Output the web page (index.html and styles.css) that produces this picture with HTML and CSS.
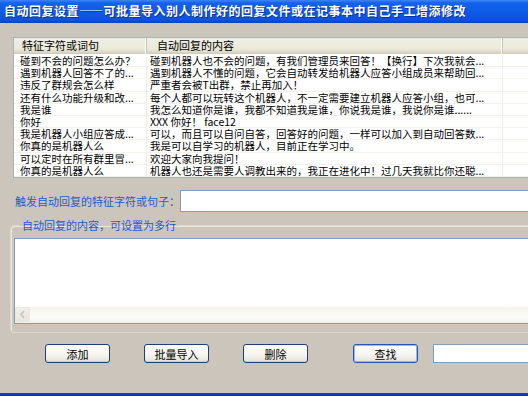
FILE: index.html
```html
<!DOCTYPE html>
<html lang="zh-CN">
<head>
  <meta charset="UTF-8">
  <title>自动回复设置</title>
  <link rel="stylesheet" href="styles.css">
</head>
<body>
  <div class="window">
    <div class="titlebar">自动回复设置——可批量导入别人制作好的回复文件或在记事本中自己手工增添修改</div>

    <div class="listview">
      <div class="row head">
        <div class="cell c1">特征字符或词句</div>
        <div class="cell c2">自动回复的内容</div>
        <div class="cell c3"></div>
      </div>
      <div class="row">
        <div class="cell c1">碰到不会的问题怎么办？</div>
        <div class="cell c2">碰到机器人也不会的问题，有我们管理员来回答！【换行】下次我就会...</div>
        <div class="cell c3"></div>
      </div>
      <div class="row">
        <div class="cell c1">遇到机器人回答不了的...</div>
        <div class="cell c2">遇到机器人不懂的问题，它会自动转发给机器人应答小组成员来帮助回...</div>
        <div class="cell c3"></div>
      </div>
      <div class="row">
        <div class="cell c1">违反了群规会怎么样</div>
        <div class="cell c2">严重者会被T出群，禁止再加入！</div>
        <div class="cell c3"></div>
      </div>
      <div class="row">
        <div class="cell c1">还有什么功能升级和改...</div>
        <div class="cell c2">每个人都可以玩转这个机器人，不一定需要建立机器人应答小组，也可...</div>
        <div class="cell c3"></div>
      </div>
      <div class="row">
        <div class="cell c1">我是谁</div>
        <div class="cell c2">我怎么知道你是谁，我都不知道我是谁，你说我是谁，我说你是谁......</div>
        <div class="cell c3"></div>
      </div>
      <div class="row">
        <div class="cell c1">你好</div>
        <div class="cell c2">XXX 你好！ face12</div>
        <div class="cell c3"></div>
      </div>
      <div class="row">
        <div class="cell c1">我是机器人小组应答成...</div>
        <div class="cell c2">可以，而且可以自问自答，回答好的问题，一样可以加入到自动回答数...</div>
        <div class="cell c3"></div>
      </div>
      <div class="row">
        <div class="cell c1">你真的是机器人么</div>
        <div class="cell c2">我是可以自学习的机器人，目前正在学习中。</div>
        <div class="cell c3"></div>
      </div>
      <div class="row">
        <div class="cell c1">可以定时在所有群里冒...</div>
        <div class="cell c2">欢迎大家向我提问！</div>
        <div class="cell c3"></div>
      </div>
      <div class="row">
        <div class="cell c1">你真的是机器人么</div>
        <div class="cell c2">机器人也还是需要人调教出来的，我正在进化中！过几天我就比你还聪...</div>
        <div class="cell c3"></div>
      </div>
    </div>

    <div class="trigger">
      <label class="blue" for="trigger_input">触发自动回复的特征字符或句子：</label>
      <input type="text" id="trigger_input" class="textbox wide">
    </div>

    <fieldset class="group">
      <legend class="blue">自动回复的内容，可设置为多行</legend>
      <div class="memo">
        <div class="memo-body"></div>
        <div class="hscroll">
          <div class="arrow">
            <svg width="15" height="15" viewBox="0 0 15 15"><path d="M9 4 L6 7.5 L9 11" fill="none" stroke="#c3c1bb" stroke-width="1.6"/></svg>
          </div>
        </div>
      </div>
    </fieldset>

    <div class="actions">
      <button class="btn">添加</button>
      <button class="btn">批量导入</button>
      <button class="btn">删除</button>
      <button class="btn find">查找</button>
      <input type="text" class="textbox search">
    </div>

    <div class="frame-bottom"></div>
  </div>
</body>
</html>
```

FILE: styles.css
```css
body {
  margin: 0;
  background-color: #cbc5bb;
  font-family: "Noto Sans CJK SC", "Liberation Sans", sans-serif;
  font-size: 11px;
  overflow: hidden;
}

.window {
  width: 528px;
  height: 396px;
  display: flex;
  flex-direction: column;
  overflow: hidden;
}

.titlebar {
  height: 23px;
  flex: none;
  box-sizing: border-box;
  padding-left: 4px;
  line-height: 22px;
  color: #fff;
  font-size: 12px;
  font-weight: bold;
  letter-spacing: 0.5px;
  white-space: nowrap;
  text-shadow: 1px 1px #0c2f9c;
  background: linear-gradient(#3d86f5 0, #1462ec 3px, #0d5ae6 12px, #0a53de 20px, #0842c4 23px);
}

/* list view */
.listview {
  flex: none;
  margin: 14px 0 2px 13px;
  width: 540px;
  height: 141px;
  box-sizing: border-box;
  border: 1px solid #a9b1b9;
  border-right: none;
  background-color: #fff;
  overflow: hidden;
}

.row {
  display: flex;
  height: 12.2px;
  line-height: 12px;
  font-size: 10.5px;
  white-space: nowrap;
  color: #000;
}

.row .cell {
  flex: none;
  box-sizing: border-box;
  overflow: hidden;
  border-right: 1px solid #f1efe2;
  border-bottom: 1px solid #f3f1e8;
}

.row.head {
  height: 16px;
  line-height: 15px;
  margin-bottom: 1px;
  font-size: 11px;
  background: linear-gradient(#efeee4, #ebeadb 11px, #e2decd 13px, #d6d2c2 15px, #cbc7b8 16px);
}

.row.head .cell {
  border-bottom: none;
  border-right: 1px solid #c7c5b2;
  box-shadow: inset -2px 0 0 -1px #fff;
}

.c1 { width: 133px; padding-left: 6px; }
.c2 { width: 356px; padding-left: 3px; }
.c3 { width: 60px; }

.row.head .c1 { padding-left: 8px; }
.row.head .c2 { padding-left: 10px; }

/* trigger row */
.trigger {
  flex: none;
  display: flex;
  align-items: center;
  margin-top: 10px;
  height: 22px;
}

.blue {
  color: #1c5ad8;
}

.trigger label {
  width: 165px;
  padding-left: 15px;
  flex: none;
}

.textbox {
  box-sizing: border-box;
  border: 1px solid #7f9db9;
  background-color: #fff;
  margin: 0;
  padding: 0 3px;
  font: inherit;
}

.textbox.wide {
  width: 360px;
  height: 22px;
  flex: none;
}

/* group box */
.group {
  flex: none;
  margin: 7px 0 0 10px;
  padding: 6px 0 8px 3px;
  width: 600px;
  box-sizing: border-box;
  border: 1px solid #dcd7cb;
  border-radius: 4px;
  box-shadow: inset 1px 1px 0 #ece8df;
}

.group legend {
  margin-left: 5px;
  padding: 0 3px;
  line-height: 13px;
}

.memo {
  height: 86px;
  box-sizing: border-box;
  border: 1px solid #7f9db9;
  border-right: none;
  background-color: #fff;
  display: flex;
  flex-direction: column;
}

.memo-body {
  flex: 1;
}

.hscroll {
  height: 16px;
  display: flex;
  background: linear-gradient(#f4f3ee, #fcfcfa 10px, #f1efe6);
}

.arrow {
  width: 15px;
  height: 15px;
  margin: 0 0 1px 0;
  box-sizing: border-box;
  border: 1px solid #e9e7df;
  border-radius: 2px;
  background: linear-gradient(#f0efe9, #e8e6de);
}

.arrow svg {
  display: block;
  margin: -1px 0 0 -1px;
}

/* buttons */
.actions {
  flex: none;
  display: flex;
  align-items: center;
  margin-top: 11px;
  padding-left: 45px;
  gap: 34px;
}

.btn {
  flex: none;
  width: 65px;
  height: 19px;
  padding: 0;
  box-sizing: border-box;
  border: 1px solid #1c3f78;
  border-radius: 3px;
  background: linear-gradient(#fff, #f5f4ef 60%, #e3e1d6);
  box-shadow: inset 0 -1px 0 #d6d0c4;
  color: #000;
  font: inherit;
  line-height: 16px;
}

.btn.find {
  margin-left: 11px;
  border-color: #2a56b2;
  box-shadow: inset 0 0 0 1px #9ab6e9;
}

.textbox.search {
  flex: none;
  width: 120px;
  height: 19px;
  margin-left: -19px;
}

.frame-bottom {
  margin-top: auto;
  height: 3px;
  flex: none;
  background: linear-gradient(#0a47d0, #0831b4);
}
```
